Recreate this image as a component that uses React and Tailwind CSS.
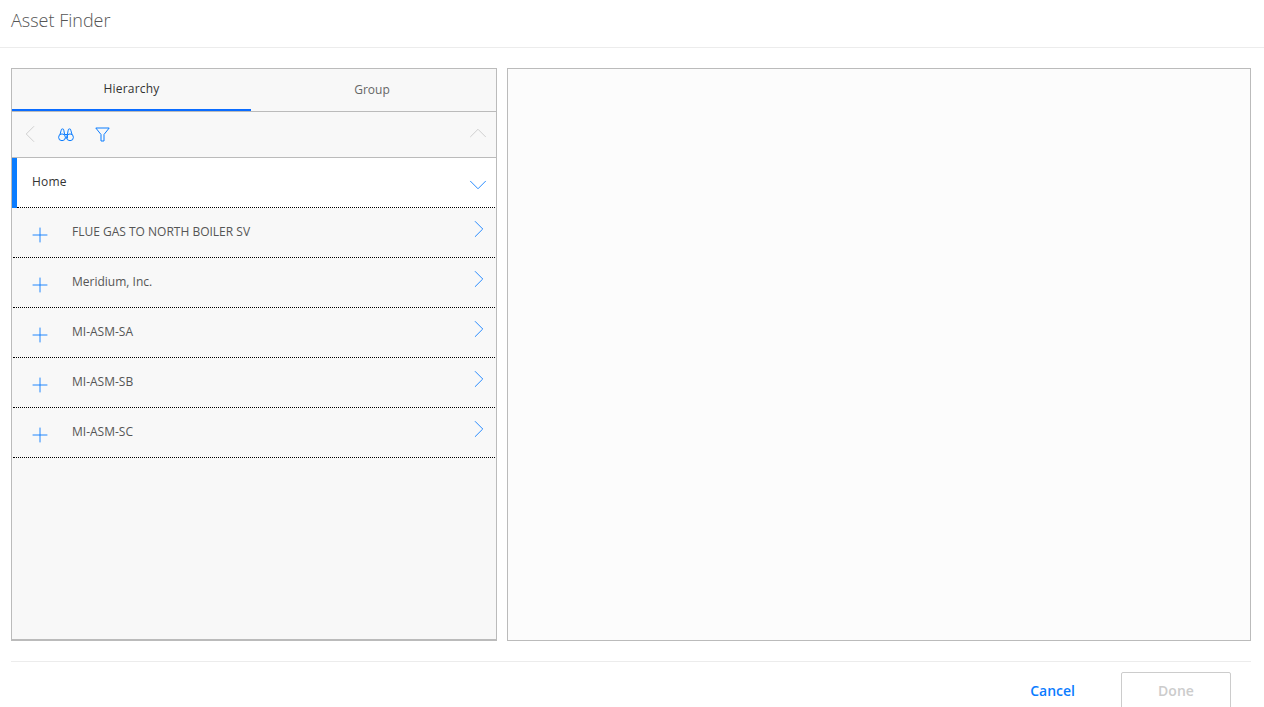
import { Plus, ChevronRight, ChevronLeft, ChevronUp, ChevronDown } from 'lucide-react';

const assets = ['FLUE GAS TO NORTH BOILER SV', 'Meridium, Inc.', 'MI-ASM-SA', 'MI-ASM-SB', 'MI-ASM-SC'];

const Binoculars = () => (
  <svg width="16" height="14" viewBox="0 0 16 14" fill="none" stroke="#0a7cff" strokeWidth="1">
    <circle cx="4" cy="9.3" r="3.4" />
    <circle cx="12" cy="9.3" r="3.4" />
    <path d="M2 6.5 L3.2 2.2 A1.3 1.3 0 0 1 5.8 2.2 L6.6 6.5" />
    <path d="M9.4 6.5 L10.2 2.2 A1.3 1.3 0 0 1 12.8 2.2 L14 6.5" />
    <path d="M6.6 6.5 H9.4 V10 H7.2" />
  </svg>
);

const Funnel = () => (
  <svg width="15" height="15" viewBox="0 0 15 15" fill="none" stroke="#0a7cff" strokeWidth="1">
    <path d="M0.8 1 H14.2 L9 7.5 V14 H6 V7.5 Z" />
  </svg>
);

const AssetRow = ({ name }) => (
  <div className="h-[50px] flex items-center border-b border-dotted border-black ml-[1px] mr-[1px] relative">
    <Plus size={24} strokeWidth={0.9} className="text-[#0a7cff] ml-[15px] mt-[5px]" />
    <span className="ml-[20px] text-xs text-[#555] -mt-[1px]">{name}</span>
    <ChevronRight size={30} strokeWidth={0.7} className="absolute right-[1px] top-[6px] text-[#0a7cff]" />
  </div>
);

const App = () => {
  return (
    <div className="h-[707px] overflow-hidden bg-white flex flex-col font-['Open_Sans',sans-serif]">
      <div className="h-[48px] shrink-0 border-b border-[#ececec] pl-[11px] pt-[8px] text-[18px] leading-[24px] font-light text-[#555]">
        Asset Finder
      </div>
      <div className="flex gap-[10px] mr-[13px] ml-[11px] mt-[20px] h-[573px] shrink-0">
        <div className="w-[486px] border border-b-2 border-[#bbb] bg-[#f8f8f8] flex flex-col">
          <div className="h-[43px] flex border-b border-[#bbb] shrink-0">
            <div className="w-[239px] border-b-[2px] border-[#0a6cff] text-xs font-medium tracking-[0.2px] text-[#333] flex justify-center pt-[12px]">
              Hierarchy
            </div>
            <div className="flex-1 text-xs text-[#666] flex justify-center pt-[13px] pr-[3px]">Group</div>
          </div>
          <div className="h-[46px] flex items-center border-b border-[#bbb] shrink-0 relative">
            <ChevronLeft size={30} strokeWidth={0.8} className="text-[#d0d0d0] ml-[3px] -mt-[2px]" />
            <span className="ml-[13px]"><Binoculars /></span>
            <span className="ml-[21px]"><Funnel /></span>
            <ChevronUp size={30} strokeWidth={0.8} className="absolute right-[3px] top-[6px] text-[#d0d0d0]" />
          </div>
          <div className="h-[50px] shrink-0 bg-white flex relative">
            <div className="w-[5px] bg-[#0a7cff]" />
            <div className="flex-1 border-b border-dotted border-black flex items-center mr-[1px]">
              <span className="ml-[15px] text-xs font-medium tracking-[0.2px] text-[#333] -mt-[2px]">Home</span>
            </div>
            <ChevronDown size={30} strokeWidth={0.7} className="absolute right-[3px] top-[12px] text-[#0a7cff]" />
          </div>
          {assets.map((a) => (
            <AssetRow key={a} name={a} />
          ))}
        </div>
        <div className="flex-1 border border-[#bbb] bg-[#fcfcfc]" />
      </div>
      <div className="mt-[20px] mr-[13px] ml-[11px] border-t border-[#ececec] flex justify-end pr-[20px] pt-[10px]">
        <button className="text-sm font-semibold text-[#0a7cff] mr-[46px] h-[38px]">Cancel</button>
        <button className="w-[110px] h-[40px] shrink-0 border border-[#ccc] rounded-[2px] text-sm font-semibold text-[#ccc] pb-[2px]">
          Done
        </button>
      </div>
    </div>
  );
};

export default App;
